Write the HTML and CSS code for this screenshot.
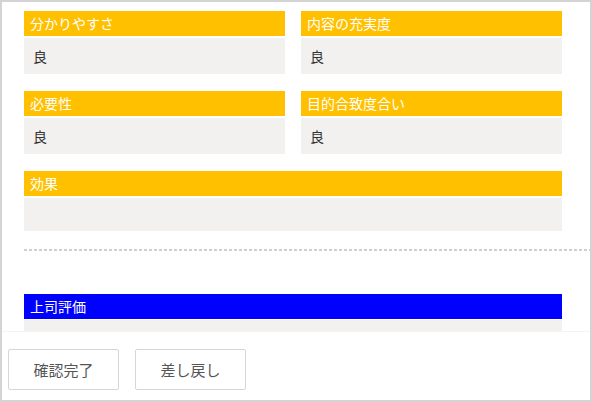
FILE: index.html
```html
<!DOCTYPE html>
<html lang="ja">
<head>
    <meta charset="UTF-8">
    <meta name="viewport" content="width=device-width, initial-scale=1.0">
    <title>評価確認</title>
    <link rel="stylesheet" href="styles.css">
</head>
<body>

<div class="frame">
    <div class="content">
        <div class="field-grid">
            <div class="field">
                <div class="field-title">分かりやすさ</div>
                <div class="field-body">良</div>
            </div>
            <div class="field">
                <div class="field-title">内容の充実度</div>
                <div class="field-body">良</div>
            </div>
            <div class="field">
                <div class="field-title">必要性</div>
                <div class="field-body">良</div>
            </div>
            <div class="field">
                <div class="field-title">目的合致度合い</div>
                <div class="field-body">良</div>
            </div>
            <div class="field wide">
                <div class="field-title">効果</div>
                <div class="field-body"></div>
            </div>
        </div>

        <div class="divider"></div>

        <div class="field boss">
            <div class="field-title">上司評価</div>
            <div class="field-body"></div>
        </div>
    </div>

    <div class="footer">
        <button class="btn">確認完了</button>
        <button class="btn">差し戻し</button>
    </div>
</div>

</body>
</html>
```

FILE: styles.css
```css
body {
    margin: 0;
    font-family: "Noto Sans CJK JP", "Noto Sans", sans-serif;
    background: #fff;
}
.frame {
    width: 592px;
    height: 402px;
    box-sizing: border-box;
    border: 2px solid #d4d4d4;
    display: flex;
    flex-direction: column;
    overflow: hidden;
}
.content {
    flex: 1;
    overflow: hidden;
    padding: 9px 28px 0 22px;
}
.field-grid {
    display: grid;
    grid-template-columns: 1fr 1fr;
    column-gap: 16px;
    row-gap: 17px;
}
.field.wide {
    grid-column: 1 / span 2;
}
.field-title {
    height: 25px;
    line-height: 25px;
    padding-left: 6px;
    background: #ffc000;
    color: #fff;
    font-size: 14px;
}
.field-body {
    margin-top: 2px;
    min-height: 33px;
    box-sizing: border-box;
    padding: 8px 9px;
    line-height: 20px;
    background: #f2f1f0;
    color: #333;
    font-size: 14px;
}
.divider {
    height: 2px;
    margin: 18px -28px 0 0;
    background: repeating-linear-gradient(to right, #cfcfcf 0 3px, transparent 3px 5px);
}
.boss {
    margin-top: 43px;
}
.boss .field-title {
    background: #0000ff;
}
.boss .field-body {
    margin-top: 1px;
}
.footer {
    height: 69px;
    box-sizing: border-box;
    padding: 17px 6px 0;
    display: flex;
    gap: 16px;
    align-items: flex-start;
    background: #fff;
    border-top: 1px solid #f3f3f3;
}
.btn {
    width: 111px;
    height: 41px;
    background: #fff;
    border: 1px solid #d6d6d6;
    border-radius: 2px;
    color: #555;
    font-family: inherit;
    font-size: 15px;
    cursor: pointer;
}
```
